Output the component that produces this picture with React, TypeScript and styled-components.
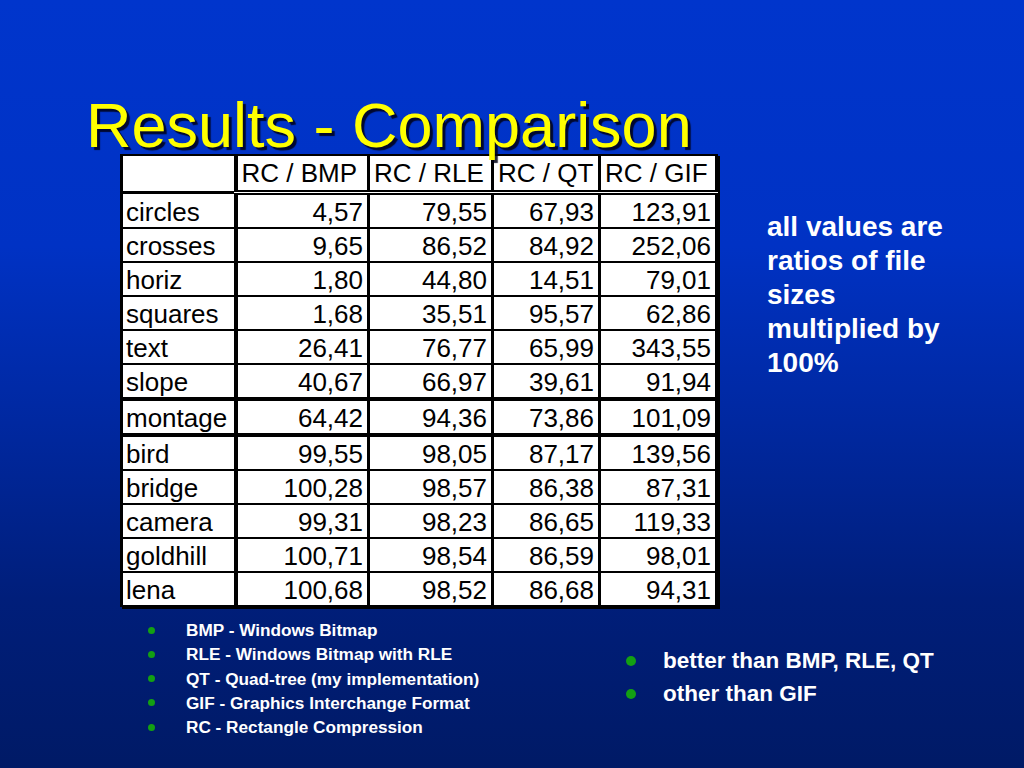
import React from "react";
import styled, { createGlobalStyle } from "styled-components";

const Global = createGlobalStyle`
  html, body { margin: 0; padding: 0; background: #001a66; }
  * { box-sizing: border-box; }
`;

const FONT = `"Liberation Sans", Arial, Helvetica, sans-serif`;

const Slide = styled.div`
  width: 1024px;
  height: 768px;
  overflow: hidden;
  padding-top: 96px;
  font-family: ${FONT};
  background: linear-gradient(
    180deg,
    #0035cc 0%,
    #0032c4 32%,
    #0028a0 55%,
    #001e7a 78%,
    #001a66 100%
  );
  display: flex;
  flex-direction: column;
`;

const Title = styled.h1`
  margin: 0;
  padding-left: 86px;
  height: 58px;
  line-height: 58px;
  font-size: 63px;
  font-weight: normal;
  color: #ffff00;
  text-shadow: 3px 3px 1px rgba(0, 0, 20, 0.85);
  white-space: nowrap;
  position: relative;
  z-index: 1;
`;

const MainRow = styled.div`
  display: flex;
  align-items: flex-start;
  padding-left: 120px;
  gap: 49px;
`;

const Table = styled.table`
  border-collapse: collapse;
  table-layout: fixed;
  background: #ffffff;
  color: #000;
  font-size: 26px;
  box-shadow: 2px 2px 0 #000;
`;

const HeadCell = styled.td<{ $first?: boolean }>`
  border: 3px solid #000;
  border-top-width: 2px;
  border-right-width: ${(p) => (p.$first ? "4px" : "3px")};
  border-bottom: ${(p) => (p.$first ? "3px solid #000" : "5px double #000")};
  height: 34px;
  padding: 0 3px 0 4px;
  line-height: 34px;
  text-align: left;
  white-space: nowrap;
  overflow: visible;
`;

const Row = styled.tr<{ $thick?: boolean }>`
  & > td {
    border-top-width: ${(p) => (p.$thick ? "4px" : "2px")};
  }
`;

const Cell = styled.td<{ $label?: boolean }>`
  border: 2px solid #000;
  border-left-width: 3px;
  border-right-width: ${(p) => (p.$label ? "4px" : "3px")};
  height: 32px;
  padding: 2px ${(p) => (p.$label ? "2px" : "4px")} 0
    ${(p) => (p.$label ? "3px" : "2px")};
  line-height: 30px;
  text-align: ${(p) => (p.$label ? "left" : "right")};
  white-space: nowrap;
  overflow: visible;
`;

const Note = styled.p`
  margin: 56px 0 0;
  color: #ffffff;
  font-weight: bold;
  font-size: 28px;
  line-height: 34px;
  width: 200px;
`;

const Footer = styled.div`
  display: grid;
  grid-template-columns: 478px auto;
  padding-left: 148px;
  margin-top: 11px;
`;

const List = styled.ul<{ $offset: number; $lh: number; $size: number }>`
  list-style: none;
  margin: ${(p) => p.$offset}px 0 0;
  padding: 0;
  color: #ffffff;
  font-weight: bold;
  font-size: ${(p) => p.$size}px;
  line-height: ${(p) => p.$lh}px;
`;

const Item = styled.li`
  display: flex;
  align-items: center;
  white-space: nowrap;
`;

const Dot = styled.span<{ $d: number; $gap: number }>`
  flex: none;
  width: ${(p) => p.$d}px;
  height: ${(p) => p.$d}px;
  border-radius: 50%;
  background: #13a013;
  margin-right: ${(p) => p.$gap}px;
`;

const headers = ["RC / BMP", "RC / RLE", "RC / QT", "RC / GIF"];
const widths = [114, 133, 124, 107, 117];

const rows: { name: string; v: string[]; thick?: boolean }[] = [
  { name: "circles", v: ["4,57", "79,55", "67,93", "123,91"] },
  { name: "crosses", v: ["9,65", "86,52", "84,92", "252,06"] },
  { name: "horiz", v: ["1,80", "44,80", "14,51", "79,01"] },
  { name: "squares", v: ["1,68", "35,51", "95,57", "62,86"] },
  { name: "text", v: ["26,41", "76,77", "65,99", "343,55"] },
  { name: "slope", v: ["40,67", "66,97", "39,61", "91,94"] },
  { name: "montage", v: ["64,42", "94,36", "73,86", "101,09"], thick: true },
  { name: "bird", v: ["99,55", "98,05", "87,17", "139,56"], thick: true },
  { name: "bridge", v: ["100,28", "98,57", "86,38", "87,31"] },
  { name: "camera", v: ["99,31", "98,23", "86,65", "119,33"] },
  { name: "goldhill", v: ["100,71", "98,54", "86,59", "98,01"] },
  { name: "lena", v: ["100,68", "98,52", "86,68", "94,31"] },
];

const legend = [
  "BMP - Windows Bitmap",
  "RLE - Windows Bitmap with RLE",
  "QT - Quad-tree (my implementation)",
  "GIF - Graphics Interchange Format",
  "RC - Rectangle Compression",
];

const verdict = ["better than BMP, RLE, QT", "other than GIF"];

export default function App() {
  return (
    <>
      <Global />
      <Slide>
        <Title>Results - Comparison</Title>
        <MainRow>
          <Table>
            <colgroup>
              {widths.map((w, i) => (
                <col key={i} style={{ width: w }} />
              ))}
            </colgroup>
            <tbody>
              <tr>
                <HeadCell $first />
                {headers.map((h) => (
                  <HeadCell key={h}>{h}</HeadCell>
                ))}
              </tr>
              {rows.map((r) => (
                <Row key={r.name} $thick={r.thick}>
                  <Cell $label>{r.name}</Cell>
                  {r.v.map((x, i) => (
                    <Cell key={i}>{x}</Cell>
                  ))}
                </Row>
              ))}
            </tbody>
          </Table>
          <Note>
            all values are
            <br />
            ratios of file
            <br />
            sizes
            <br />
            multiplied by
            <br />
            100%
          </Note>
        </MainRow>
        <Footer>
          <List $offset={0} $lh={24.25} $size={17.2}>
            {legend.map((t) => (
              <Item key={t}>
                <Dot $d={7} $gap={31} />
                {t}
              </Item>
            ))}
          </List>
          <List $offset={26} $lh={33} $size={22.5}>
            {verdict.map((t) => (
              <Item key={t}>
                <Dot $d={10} $gap={27} />
                {t}
              </Item>
            ))}
          </List>
        </Footer>
      </Slide>
    </>
  );
}
